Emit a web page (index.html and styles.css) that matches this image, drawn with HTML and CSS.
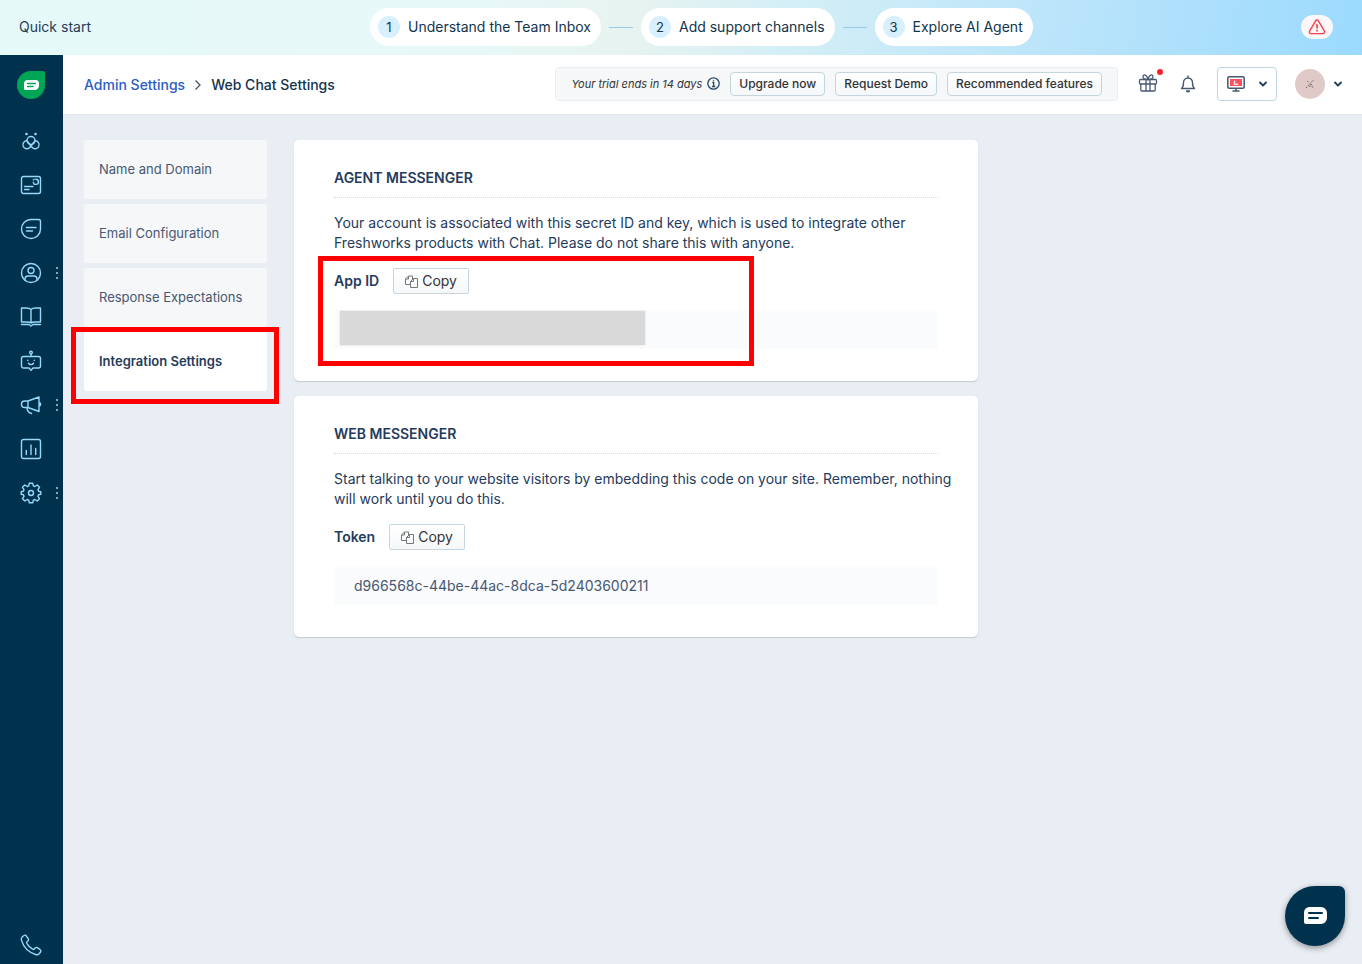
FILE: index.html
```html
<!DOCTYPE html>
<html lang="en">
<head>
  <meta charset="utf-8">
  <title>Web Chat Settings</title>
  <link rel="stylesheet" href="styles.css">
</head>
<body>
  <div class="quickbar">
    <span class="quick-title">Quick start</span>
    <div class="steps">
      <button class="step"><span class="step-number">1</span>Understand the Team Inbox</button>
      <span class="step-line"></span>
      <button class="step"><span class="step-number">2</span>Add support channels</button>
      <span class="step-line"></span>
      <button class="step"><span class="step-number">3</span>Explore AI Agent</button>
    </div>
    <button class="alert" aria-label="Alerts">
      <svg width="18" height="16" viewBox="0 0 18 16" fill="none" stroke="#f5424f" stroke-width="1.4" stroke-linecap="round" stroke-linejoin="round"><path d="M7.6 1.8 1.6 12.2a1.6 1.6 0 0 0 1.4 2.4h12a1.6 1.6 0 0 0 1.4-2.4L10.4 1.8a1.6 1.6 0 0 0-2.8 0z"/><path d="M9 5.6v3.2M9 11.4v.4" stroke-width="1.7"/></svg>
    </button>
  </div>

  <div class="shell">
    <nav class="sidebar">
      <a class="logo" href="#" aria-label="Home">
        <svg width="28" height="28" viewBox="0 0 28 28"><path d="M14 0h11.500a2.500 2.500 0 0 1 2.500 2.500V14A14 14 0 1 1 14 0z" fill="#00a656"/><path d="M11 9h7.500a3.500 3.500 0 0 1 3.500 3.500v2a4.500 4.500 0 0 1-4.500 4.500H8.500A1.500 1.500 0 0 1 7 17.500V13a4 4 0 0 1 4-4z" fill="#fff"/><path d="M10.500 12.500h8M10.500 15.500h5.500" stroke="#00a656" stroke-width="1.300" stroke-linecap="round"/></svg>
      </a>
      <a class="nav-item" href="#" aria-label="Freddy">
        <svg class="icon" viewBox="0 0 22 22"><circle cx="6.500" cy="4" r="1.300" fill="#97d8fb" stroke="none"/><circle cx="15.500" cy="4" r="1.300" fill="#97d8fb" stroke="none"/><circle cx="11" cy="10.500" r="4"/><path d="M7 10.800a4 4 0 1 0 3 6.500l4.300-5.500"/><path d="M15 10.800a4 4 0 1 1-3 6.500L7.700 11.800"/></svg>
      </a>
      <a class="nav-item" href="#" aria-label="Dashboard">
        <svg class="icon" viewBox="0 0 22 22"><path d="M3.500 2.500h15a2 2 0 0 1 2 2v13a2 2 0 0 1-2 2h-15a2 2 0 0 1-2-2v-13a2 2 0 0 1 2-2zM4.500 12.500h8.500M4.500 15.500H9"/><path d="M13.300 8.300a2.600 2.600 0 1 0 2.500-3.100M13.300 5.800l.8-.4"/></svg>
      </a>
      <a class="nav-item" href="#" aria-label="Team inbox">
        <svg class="icon" viewBox="0 0 22 22"><path d="M11 1.500h7.500a2 2 0 0 1 2 2V11A9.500 9.500 0 1 1 11 1.500z"/><path d="M6.500 9.500h9.500M6.500 13h6"/></svg>
      </a>
      <a class="nav-item" href="#" aria-label="Contacts">
        <svg class="icon" viewBox="0 0 22 22"><circle cx="11" cy="11" r="9.500"/><circle cx="11" cy="8.500" r="3"/><path d="M5 18v-1.200a3 3 0 0 1 3-2.800h6a3 3 0 0 1 3 2.800V18"/></svg>
        <span class="dots"></span>
      </a>
      <a class="nav-item" href="#" aria-label="Articles">
        <svg class="icon" viewBox="0 0 22 22"><path d="M11 3.500C9.500 2 8 2 6.500 2h-5v14h5c2 0 3.500 0 4.500 1 1-1 2.500-1 4.500-1h5V2h-5c-1.500 0-3 0-4.500 1.500zM11 3.500V17M1.500 18.500H9l2 1.500 2-1.500h7.500"/></svg>
      </a>
      <a class="nav-item" href="#" aria-label="Bots">
        <svg class="icon" viewBox="0 0 22 22"><circle cx="11" cy="2.500" r="1.300"/><path d="M11 4v2.500M3.500 6.500h15a2 2 0 0 1 2 2V16a2 2 0 0 1-2 2h-5.500l-2 2.200L9 18H3.500a2 2 0 0 1-2-2V8.500a2 2 0 0 1 2-2zM7.800 10.300v.3M14.200 10.300v.3M8.500 13.300c1.300 1.700 3.700 1.700 5 0"/></svg>
      </a>
      <a class="nav-item" href="#" aria-label="Campaigns">
        <svg class="icon" viewBox="0 0 22 22"><path d="M8 7 19 3v14.500L8 13.500zM8 7H4.700a3.250 3.250 0 0 0 0 6.500H8M7 13.500c0 2.800 1.500 5 4.500 6M19 8.500c2.200.4 2.200 3.100 0 3.500"/></svg>
        <span class="dots"></span>
      </a>
      <a class="nav-item" href="#" aria-label="Analytics">
        <svg class="icon" viewBox="0 0 22 22"><rect x="1.500" y="1.500" width="19" height="19" rx="2"/><path d="M6.300 12.500v4M11 7v9.500M15.700 10.500v6"/></svg>
      </a>
      <a class="nav-item" href="#" aria-label="Settings">
        <svg class="icon" viewBox="0 0 22 22"><path d="M9.300 1.200h3.400l.6 2.700 1.500.6 2.400-1.500 2.300 2.300L18 7.700l.6 1.500 2.200.5v2.600l-2.200.5-.6 1.500 1.500 2.400-2.300 2.300-2.400-1.500-1.500.6-.6 2.700H9.300l-.6-2.700-1.500-.6-2.400 1.500-2.300-2.300L4 14.300l-.6-1.500-2.200-.5V9.700l2.200-.5L4 7.700 2.500 5.300 4.800 3l2.400 1.500 1.500-.6z"/><circle cx="11" cy="11" r="2.500"/></svg>
        <span class="dots"></span>
      </a>
      <a class="nav-item phone" href="#" aria-label="Phone">
        <svg class="icon" viewBox="0 0 22 22"><path d="M2.300 2.800 4 1.500a1.600 1.600 0 0 1 2.300.3l2 3a1.600 1.600 0 0 1-.3 2.100L7 7.800c-.5.400-.5 1-.2 1.600a16 16 0 0 0 5.800 5.800c.6.300 1.200.300 1.600-.2l.9-1a1.600 1.600 0 0 1 2.100-.3l3 2a1.600 1.600 0 0 1 .3 2.300l-1.300 1.700c-.9 1-2.300 1.200-3.600.8C8.500 18.300 3.700 13.500 1.500 6.400c-.4-1.300-.2-2.700.8-3.600z"/></svg>
      </a>
    </nav>

    <div class="main">
      <header class="header">
        <div class="breadcrumb">
          <a href="#">Admin Settings</a>
          <svg width="8" height="12" viewBox="0 0 8 12" fill="none" stroke="#4a5560" stroke-width="1.300"><path d="m1.500 1.500 4.500 4.500-4.500 4.500"/></svg>
          <span>Web Chat Settings</span>
        </div>
        <div class="trial">
          <em>Your trial ends in 14 days</em>
          <svg class="info" width="13" height="13" viewBox="0 0 13 13" fill="none" stroke="#264966" stroke-width="1.300"><circle cx="6.500" cy="6.500" r="5.700"/><path d="M5.200 5.700h1.500v3.800M5 9.500h3.200M6.500 3.200v1.300"/></svg>
          <button>Upgrade now</button>
          <button>Request Demo</button>
          <button>Recommended features</button>
        </div>
        <button class="icon-button gift" aria-label="What's new">
          <svg width="20" height="20" viewBox="0 0 20 20" fill="none" stroke="#475872" stroke-width="1.300" stroke-linejoin="round"><rect x="1.500" y="5.500" width="17" height="4.500" rx="1"/><path d="M2.800 10v6a1 1 0 0 0 1 1h12.400a1 1 0 0 0 1-1v-6M8 5.500V17M12 5.500V17M10 5.500C8 5.500 5 5 5 2.800 5-.2 9 .2 10 5.500 11 .2 15-.2 15 2.800c0 2.200-3 2.700-5 2.700z"/></svg>
          <span class="badge"></span>
        </button>
        <button class="icon-button bell" aria-label="Notifications">
          <svg width="16" height="18" viewBox="0 0 16 18" fill="none" stroke="#475872" stroke-width="1.400" stroke-linecap="round" stroke-linejoin="round"><path d="M8 1v1.500M1.500 13.500c1.500-1.200 2-2.500 2-6a4.500 4.500 0 0 1 9 0c0 3.500.5 4.800 2 6z"/><path d="M6.500 16c.8.900 2.200.9 3 0z" fill="#475872"/></svg>
        </button>
        <button class="status" aria-label="Availability">
          <svg width="18" height="16" viewBox="0 0 18 16" fill="none" stroke="#475872" stroke-width="1.500"><rect x=".8" y=".8" width="16.400" height="11.400" rx="1.500"/><rect x="3" y="3" width="12" height="7" fill="#ff4f5e" stroke="none"/><path d="M7.500 4.500v3.800h3.800" stroke="#ffe1e4"/><path d="M9 12v3M5.500 15h7"/></svg>
          <svg class="caret" viewBox="0 0 8 6"><path d="m1 1.500 3 3 3-3"/></svg>
        </button>
        <button class="profile" aria-label="Profile">
          <span class="avatar"><svg width="10" height="10" viewBox="0 0 10 10" fill="none" stroke="#6d5f60" stroke-width="1" stroke-dasharray="1.500 1"><path d="M1 9 8.500 1M2.500 2 4 4M6 5l2 4M5 8V5"/></svg></span>
          <svg class="caret" viewBox="0 0 8 6"><path d="m1 1.500 3 3 3-3"/></svg>
        </button>
      </header>

      <div class="content">
        <nav class="tabs">
          <a href="#">Name and Domain</a>
          <a href="#">Email Configuration</a>
          <a href="#">Response Expectations</a>
          <a class="active" href="#">Integration Settings<span class="highlight tab-highlight"></span></a>
        </nav>

        <div class="cards">
          <section class="card">
            <h2>AGENT MESSENGER</h2>
            <p>Your account is associated with this secret ID and key, which is used to integrate other Freshworks products with Chat. Please do not share this with anyone.</p>
            <div class="field">
              <div class="field-label">
                <span>App ID</span>
                <button class="copy">
                  <svg width="13" height="13" viewBox="0 0 13 13" fill="none" stroke="#777" stroke-width="1"><path d="M5.500 9.500h-5V4l3-3h4v3M3.500 1v3h-3M8.500 3.500h4v9h-7V6.500zM8.500 3.500v3h-3"/></svg>
                  Copy
                </button>
              </div>
              <div class="code"><span class="redacted"></span></div>
              <span class="highlight field-highlight"></span>
            </div>
          </section>

          <section class="card">
            <h2>WEB MESSENGER</h2>
            <p>Start talking to your website visitors by embedding this code on your site. Remember, nothing will work until you do this.</p>
            <div class="field">
              <div class="field-label">
                <span>Token</span>
                <button class="copy">
                  <svg width="13" height="13" viewBox="0 0 13 13" fill="none" stroke="#777" stroke-width="1"><path d="M5.500 9.500h-5V4l3-3h4v3M3.500 1v3h-3M8.500 3.500h4v9h-7V6.500zM8.500 3.500v3h-3"/></svg>
                  Copy
                </button>
              </div>
              <div class="code">d966568c-44be-44ac-8dca-5d2403600211</div>
            </div>
          </section>
        </div>
      </div>
    </div>
  </div>

  <button class="launcher" aria-label="Open chat">
    <svg width="24" height="18" viewBox="0 0 24 18"><path d="M6 0h12a6 6 0 0 1 6 6v5a6 6 0 0 1-6 6H3a2 2 0 0 1-2-2V6a6 6 0 0 1 5-6z" fill="#fff"/><path d="M6 6h13M6 11h9" stroke="#00324d" stroke-width="2" stroke-linecap="round"/></svg>
  </button>
</body>
</html>
```

FILE: styles.css
```css
* {
  box-sizing: border-box;
}

body {
  margin: 0;
  min-height: 100vh;
  display: flex;
  flex-direction: column;
  background-color: #e9eef5;
  font-family: Inter, "Liberation Sans", sans-serif;
  font-size: 14px;
  line-height: 20px;
  color: #253b5b;
}

a {
  color: inherit;
  text-decoration: none;
}

button {
  font: inherit;
  color: inherit;
  padding: 0;
  border: none;
  background: none;
  cursor: pointer;
}

svg {
  display: block;
  flex-shrink: 0;
}

/* quick start bar */
.quickbar {
  display: flex;
  align-items: center;
  height: 55px;
  padding: 0 29px 1px 19px;
  background: linear-gradient(100deg, #e5faf8 0%, #e7f8f8 35%, #e7f3f0 46%, #d5eff6 57%, #bde5fa 76%, #9bdafe 100%);
}

.quick-title {
  width: 351px;
}

.steps {
  display: flex;
  align-items: center;
  gap: 8px;
}

.step {
  display: flex;
  align-items: center;
  gap: 8px;
  height: 38px;
  padding: 0 10px 0 8px;
  border-radius: 19px;
  background-color: #fff;
  color: #12344d;
}

.step-number {
  width: 22px;
  height: 22px;
  border-radius: 50%;
  background-color: #d7effe;
  font-size: 13px;
  line-height: 22px;
  text-align: center;
}

.step-line {
  width: 24px;
  height: 1px;
  background-color: #94cbeb;
}

.alert {
  display: flex;
  align-items: center;
  justify-content: center;
  width: 32px;
  height: 24px;
  margin-left: auto;
  border-radius: 12px;
  background-color: #fbf7f8;
}

.shell {
  flex: 1;
  display: flex;
}

/* sidebar */
.sidebar {
  width: 63px;
  display: flex;
  flex-direction: column;
  padding-top: 16px;
  background-color: #00324d;
}

.logo {
  margin: 0 0 20px 17px;
}

.nav-item {
  display: flex;
  align-items: center;
  height: 44px;
  padding-left: 20px;
}

.icon {
  width: 22px;
  height: 22px;
  fill: none;
  stroke: #97d8fb;
  stroke-width: 1.4;
  stroke-linecap: round;
  stroke-linejoin: round;
}

.dots {
  width: 2px;
  height: 12px;
  margin-left: 14px;
  background: repeating-linear-gradient(#7fa5ba 0, #7fa5ba 2px, transparent 2px, transparent 5px);
}

.phone {
  height: 38px;
  margin-top: auto;
}

/* header */
.main {
  flex: 1;
  min-width: 0;
}

.header {
  display: flex;
  align-items: center;
  height: 60px;
  padding: 0 20px 2px 21px;
  background-color: #fff;
  border-bottom: 1px solid #e0e6ec;
}

.breadcrumb {
  display: flex;
  align-items: center;
  gap: 9px;
  padding-top: 2px;
  font-weight: 500;
  color: #12344d;
}

.breadcrumb a {
  color: #2c5cc5;
}

.trial {
  display: flex;
  align-items: center;
  gap: 10px;
  height: 34px;
  margin-left: auto;
  padding: 0 15px;
  border: 1px solid #e8edf2;
  border-radius: 4px;
  background-color: #f5f7f9;
  color: #333;
}

.trial em {
  font-size: 11px;
}

.info {
  margin-left: -5px;
}

.trial button {
  height: 24px;
  padding: 0 8px;
  border: 1px solid #c5d5e0;
  border-radius: 4px;
  background: linear-gradient(#fff, #f5f7f9);
  font-size: 12px;
  font-weight: 500;
}

.icon-button {
  position: relative;
}

.gift {
  margin-left: 20px;
}

.bell {
  margin-left: 22px;
}

.badge {
  position: absolute;
  top: -5px;
  right: -5px;
  width: 6px;
  height: 6px;
  border-radius: 50%;
  background-color: #ff1f2b;
}

.status {
  display: flex;
  align-items: center;
  justify-content: space-between;
  width: 60px;
  height: 34px;
  margin-left: 21px;
  padding: 0 9px;
  border: 1px solid #c5d5e0;
  border-radius: 4px;
}

.caret {
  width: 8px;
  height: 6px;
  fill: none;
  stroke: #253b5b;
  stroke-width: 1.8;
  stroke-linecap: round;
  stroke-linejoin: round;
}

.profile {
  display: flex;
  align-items: center;
  gap: 9px;
  margin-left: 18px;
}

.avatar {
  display: flex;
  align-items: center;
  justify-content: center;
  width: 30px;
  height: 30px;
  border-radius: 50%;
  background-color: #dfcac7;
}

/* settings */
.content {
  display: flex;
  align-items: flex-start;
  gap: 27px;
  padding: 25px 21px;
}

.tabs {
  display: flex;
  flex-direction: column;
  gap: 5px;
  width: 183px;
}

.tabs a {
  position: relative;
  padding: 20px 15px;
  border-radius: 3px;
  background-color: #f5f7f9;
  font-size: 13px;
  line-height: 19px;
  color: #475872;
}

.tabs .active {
  background-color: #fff;
  font-weight: 600;
  color: #253b5b;
}

.cards {
  flex: 1;
  display: flex;
  flex-direction: column;
  gap: 15px;
  max-width: 684px;
}

.card {
  padding: 28px 40px 32px;
  border-radius: 5px;
  background-color: #fff;
  box-shadow: 0 1px 1px #c3cad1;
}

.card h2 {
  margin: 0 0 15px;
  padding-bottom: 9px;
  border-bottom: 1px dotted #d3d9df;
  font-size: 14px;
  line-height: 20px;
  font-weight: 600;
}

.card p {
  margin: 0 -20px 15px 0;
}

.field {
  position: relative;
}

.field-label {
  display: flex;
  align-items: center;
  gap: 14px;
  margin-bottom: 16px;
  font-weight: 600;
}

.copy {
  display: flex;
  align-items: center;
  gap: 4px;
  height: 26px;
  padding: 0 11px;
  border: 1px solid #c5d5e0;
  border-radius: 2px;
  background: linear-gradient(#fff, #f5f7f9);
  font-weight: 400;
  color: #333;
}

.code {
  display: flex;
  align-items: center;
  height: 39px;
  padding: 0 20px;
  border-radius: 4px;
  background-color: #fafbfc;
  color: #475872;
}

.redacted {
  width: 305px;
  height: 34px;
  margin: 0 0 3px -14px;
  background-color: #d9d9d9;
  box-shadow: 0 0 2px #d9d9d9;
}

/* red outlines drawn over the page */
.highlight {
  position: absolute;
  border: 5px solid #fe0000;
  pointer-events: none;
}

.tab-highlight {
  top: -5px;
  right: -12px;
  bottom: -13px;
  left: -13px;
}

.field-highlight {
  top: -12px;
  bottom: -17px;
  left: -16px;
  width: 436px;
}

.launcher {
  position: fixed;
  right: 17px;
  bottom: 18px;
  display: flex;
  align-items: center;
  justify-content: center;
  width: 60px;
  height: 60px;
  border-radius: 30px 6px 30px 30px;
  background-color: #00324d;
  box-shadow: 0 2px 6px rgba(0, 0, 0, 0.4);
}
```
